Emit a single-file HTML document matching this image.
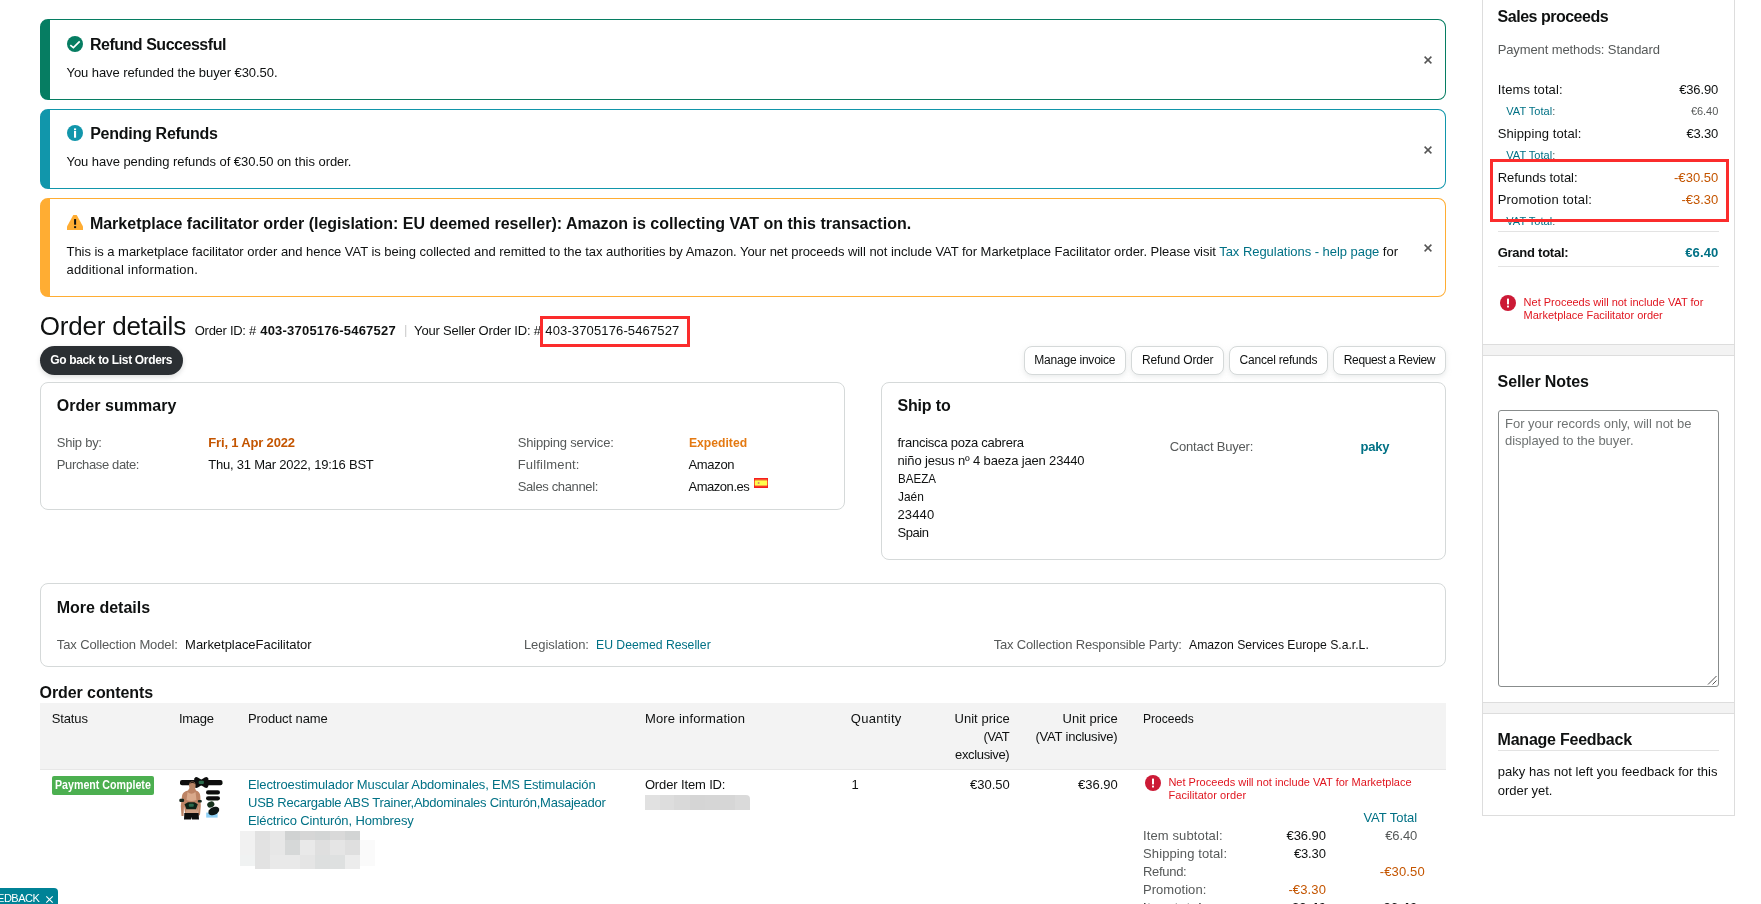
<!DOCTYPE html>
<html lang="en"><head><meta charset="utf-8"><title>Order details</title>
<style>
html,body{margin:0;padding:0;background:#fff;}
body{font-family:"Liberation Sans",sans-serif;color:#0F1111;}
#page{position:relative;width:1761px;height:904px;overflow:hidden;background:#fff;}
.t{position:absolute;white-space:nowrap;line-height:1;}
.b{position:absolute;box-sizing:border-box;}
.alert{border:1px solid;border-left-width:10px;border-radius:8px;background:#fff;}
.card{border:1px solid #D5D9D9;border-radius:8px;background:#fff;}
.btn{border:1px solid #D5D9D9;border-radius:8px;background:#fff;box-shadow:0 2px 5px rgba(213,217,217,.5);}
.hr{background:#E3E3E3;height:1px;}
svg{position:absolute;overflow:visible;}
#txt{position:absolute;left:0;top:0;width:1761px;height:904px;will-change:transform;z-index:6;}

</style></head>
<body>
<div id="page">
<!-- alerts -->
<div class="b alert" style="left:40px;top:19px;width:1406px;height:81px;border-color:#067D62;"></div>
<div class="b alert" style="left:40px;top:109px;width:1406px;height:80px;border-color:#1196AB;"></div>
<div class="b alert" style="left:40px;top:198px;width:1406px;height:99px;border-color:#FFAD33;"></div>
<svg style="left:67px;top:36px" width="16" height="16" viewBox="0 0 16 16"><circle cx="8" cy="8" r="8" fill="#067D62"/><path d="M3.3 9.1 L6.4 11.6 L12.7 5.3" fill="none" stroke="#fff" stroke-width="1.7"/></svg>
<svg style="left:67px;top:125px" width="16" height="16" viewBox="0 0 16 16"><circle cx="8" cy="8" r="8" fill="#1196AB"/><rect x="7" y="3.4" width="2.1" height="1.7" fill="#fff"/><rect x="7" y="5.9" width="2.1" height="6.8" fill="#fff"/></svg>
<svg style="left:67px;top:215px" width="16" height="15" viewBox="0 0 16 15"><path d="M6.3 0 H9.7 L16 11.5 V15 H0 V11.5 Z" fill="#FFAD33"/><rect x="7.1" y="4.1" width="2" height="5.6" fill="#0F1111"/><rect x="7.1" y="11.2" width="2" height="1.9" fill="#0F1111"/></svg>
<svg style="left:1424px;top:56px" width="8" height="8" viewBox="0 0 8 8"><path d="M0.6 0.6 L7.4 7.4 M7.4 0.6 L0.6 7.4" stroke="#555" stroke-width="1.5" fill="none"/></svg>
<svg style="left:1424px;top:145.5px" width="8" height="8" viewBox="0 0 8 8"><path d="M0.6 0.6 L7.4 7.4 M7.4 0.6 L0.6 7.4" stroke="#555" stroke-width="1.5" fill="none"/></svg>
<svg style="left:1424px;top:244px" width="8" height="8" viewBox="0 0 8 8"><path d="M0.6 0.6 L7.4 7.4 M7.4 0.6 L0.6 7.4" stroke="#555" stroke-width="1.5" fill="none"/></svg>
<!-- header -->
<div class="b" style="left:40px;top:346px;width:143px;height:29px;border-radius:14.5px;background:#2B2F33;box-shadow:0 2px 5px rgba(15,17,17,.15);"></div>
<div class="b btn" style="left:1024px;top:346px;width:102px;height:29px;"></div>
<div class="b btn" style="left:1131px;top:346px;width:93px;height:29px;"></div>
<div class="b btn" style="left:1229px;top:346px;width:99px;height:29px;"></div>
<div class="b btn" style="left:1333px;top:346px;width:113px;height:29px;"></div>
<div class="b" style="left:540px;top:316px;width:150px;height:31px;border:3px solid #FB2C2C;z-index:7;"></div>
<!-- cards -->
<div class="b card" style="left:40px;top:382px;width:805px;height:128px;"></div>
<div class="b card" style="left:881px;top:382px;width:565px;height:178px;"></div>
<div class="b card" style="left:40px;top:583px;width:1406px;height:84px;"></div>
<svg style="left:754px;top:478px" width="14" height="10" viewBox="0 0 14 10"><rect width="14" height="10" fill="#F71D1D"/><rect x="0.8" y="1.6" width="12.4" height="6.6" fill="#F6A53A"/><rect x="0.8" y="2.8" width="12.4" height="4.3" fill="#FFFF4D"/><circle cx="4.6" cy="5.1" r="1" fill="#D4826E"/></svg>
<!-- table -->
<div class="b" style="left:40px;top:703px;width:1406px;height:67px;background:#F3F3F3;border-bottom:1px solid #E7E7E7;"></div>
<div class="b" style="left:52px;top:776px;width:102px;height:19px;border-radius:2px;background:#4CAF50;"></div>
<!-- sidebar -->
<div class="b" style="left:1482px;top:-10px;width:253px;height:826px;border:1px solid #DDDDDD;background:#fff;"></div>
<div class="b" style="left:1483px;top:344px;width:251px;height:12px;background:#F3F3F3;border-top:1px solid #DDDDDD;border-bottom:1px solid #DDDDDD;"></div>
<div class="b" style="left:1483px;top:702px;width:251px;height:12px;background:#F3F3F3;border-top:1px solid #DDDDDD;border-bottom:1px solid #DDDDDD;"></div>
<div class="b hr" style="left:1498px;top:231px;width:221px;"></div>
<div class="b hr" style="left:1498px;top:266px;width:221px;"></div>
<div class="b hr" style="left:1498px;top:750px;width:221px;"></div>
<div class="b" style="left:1498px;top:410px;width:221px;height:277px;border:1px solid #888C8C;border-radius:3px;background:#fff;"></div>
<div class="b" style="left:1490px;top:159px;width:239px;height:63px;border:3px solid #FB2C2C;z-index:7;"></div>
<!-- feedback tab -->
<div class="b" style="left:0;top:887.5px;width:58px;height:20px;background:#008296;border-radius:0 4px 0 0;"></div>
<!-- error icons -->
<svg style="left:1145px;top:775px" width="16" height="16" viewBox="0 0 16 16"><circle cx="8" cy="8" r="8" fill="#CC1A36"/><rect x="7" y="3.4" width="2" height="6" rx="0.6" fill="#fff"/><rect x="7" y="10.6" width="2" height="2" rx="0.6" fill="#fff"/></svg>
<svg style="left:1500px;top:295px" width="16" height="16" viewBox="0 0 16 16"><circle cx="8" cy="8" r="8" fill="#CC1A36"/><rect x="7" y="3.4" width="2" height="6" rx="0.6" fill="#fff"/><rect x="7" y="10.6" width="2" height="2" rx="0.6" fill="#fff"/></svg>
<!-- product thumbnail -->
<svg style="left:179px;top:776px" width="44" height="44" viewBox="0 0 44 44">
<defs><filter id="sb" x="-10%" y="-10%" width="120%" height="120%"><feGaussianBlur stdDeviation="0.45"/></filter></defs>
<g filter="url(#sb)">
<rect x="1" y="4" width="42.5" height="5.2" rx="2" fill="#0b0f0d"/>
<g transform="translate(22.3 6.4)"><rect x="-8" y="-2.4" width="16" height="4.8" rx="2.4" fill="#0b0f0d" transform="rotate(32)"/><rect x="-8" y="-2.4" width="16" height="4.8" rx="2.4" fill="#0b0f0d" transform="rotate(-32)"/><rect x="-2.6" y="-1.6" width="5.2" height="3.2" rx="1" fill="#2a6b4c"/></g>
<path d="M3 20 Q3.5 15.5 9 14.5 L10.5 12 L16 12 L17 14.5 Q21 15.5 21.3 20 L21.8 30 L21 39 L19 40 L19.3 30 L18.6 37 L6 37 L5 30 L4.5 40 L2.5 40 L1.8 30 Z" fill="#bd8465"/>
<path d="M8.5 16 Q12.5 19.5 16.5 16 L17.5 24 Q12.5 26 7.5 24 Z" fill="#d9a98b"/>
<path d="M8 31.5 L17.5 31.5 L18.2 37 L6.5 37 Z" fill="#cf9f83"/>
<ellipse cx="13.3" cy="9.6" rx="3.3" ry="4" fill="#b98566"/>
<path d="M10 8 Q13.3 3.6 16.6 8 Q13.3 6.2 10 8Z" fill="#2a1d16"/>
<rect x="0.3" y="22.8" width="4.8" height="3.2" rx="1.2" fill="#17261d"/>
<rect x="18.8" y="24" width="4" height="2.6" rx="1" fill="#17261d"/>
<path d="M5.5 28.2 L9 26.3 L15.5 26.3 L18.8 28.2 L17 33.2 L7.5 33.2 Z" fill="#0e2218"/>
<rect x="9.8" y="27.8" width="5" height="3" rx="1" fill="#2a6b4c"/>
<path d="M5.3 37 L19.6 37 L20 43.6 L13 43.6 L12.5 41 L12 43.6 L5 43.6 Z" fill="#0e0e10"/>
<rect x="27" y="14.3" width="14" height="4.2" rx="2.1" fill="#0b0f0d"/>
<rect x="27" y="20.2" width="14" height="4.2" rx="2.1" fill="#0b0f0d"/>
<ellipse cx="31.8" cy="28.5" rx="3.7" ry="2.9" fill="#16301f" transform="rotate(-20 31.8 28.5)"/>
<rect x="27.2" y="36.6" width="11.4" height="5" fill="#8fd0f5"/>
<ellipse cx="34.8" cy="35" rx="5.7" ry="3.9" fill="#0d1512" transform="rotate(-25 34.8 35)"/>
</g>
</svg>
<!-- blurred / pixelated blocks -->
<div class="b" style="left:240px;top:831px;width:15px;height:9px;background:#F1F1F1;"></div>
<div class="b" style="left:255px;top:831px;width:15px;height:9px;background:#E1E1E1;"></div>
<div class="b" style="left:270px;top:831px;width:15px;height:9px;background:#E7E7E7;"></div>
<div class="b" style="left:285px;top:831px;width:15px;height:9px;background:#D0D2D2;"></div>
<div class="b" style="left:300px;top:831px;width:15px;height:9px;background:#D6D6D6;"></div>
<div class="b" style="left:315px;top:831px;width:15px;height:9px;background:#D3D5D5;"></div>
<div class="b" style="left:330px;top:831px;width:15px;height:9px;background:#D9D9D9;"></div>
<div class="b" style="left:345px;top:831px;width:15px;height:9px;background:#D2D4D4;"></div>
<div class="b" style="left:240px;top:840px;width:15px;height:15px;background:#F1F1F1;"></div>
<div class="b" style="left:255px;top:840px;width:15px;height:15px;background:#E2E2E2;"></div>
<div class="b" style="left:270px;top:840px;width:15px;height:15px;background:#E7E7E7;"></div>
<div class="b" style="left:285px;top:840px;width:15px;height:15px;background:#D6D8D8;"></div>
<div class="b" style="left:300px;top:840px;width:15px;height:15px;background:#E9E9E9;"></div>
<div class="b" style="left:315px;top:840px;width:15px;height:15px;background:#DFDFDF;"></div>
<div class="b" style="left:330px;top:840px;width:15px;height:15px;background:#E5E5E5;"></div>
<div class="b" style="left:345px;top:840px;width:15px;height:15px;background:#DFDFDF;"></div>
<div class="b" style="left:360px;top:840px;width:15px;height:15px;background:#FAFAFA;"></div>
<div class="b" style="left:240px;top:855px;width:15px;height:11px;background:#F0F2F2;"></div>
<div class="b" style="left:255px;top:855px;width:15px;height:14px;background:#E2E2E2;"></div>
<div class="b" style="left:270px;top:855px;width:15px;height:14px;background:#E9E9E9;"></div>
<div class="b" style="left:285px;top:855px;width:15px;height:14px;background:#E9E9E9;"></div>
<div class="b" style="left:300px;top:855px;width:15px;height:14px;background:#E5E5E5;"></div>
<div class="b" style="left:315px;top:855px;width:15px;height:14px;background:#DDDFDF;"></div>
<div class="b" style="left:330px;top:855px;width:15px;height:14px;background:#DEE0E0;"></div>
<div class="b" style="left:345px;top:855px;width:15px;height:14px;background:#ECECEC;"></div>
<div class="b" style="left:360px;top:855px;width:15px;height:11px;background:#FAFAFA;"></div>
<div class="b" style="left:645px;top:795px;width:105px;height:15px;border-radius:0 4px 0 0;background:linear-gradient(90deg,#E1E1E1 0,#E1E1E1 14%,#DDDDDD 14%,#DDDDDD 28%,#D9D9D9 28%,#D9D9D9 43%,#D5D5D5 43%,#D5D5D5 57%,#D6D6D6 57%,#D6D6D6 86%,#DADADA 86%);"></div>
<!-- textarea grip -->
<svg style="left:1707px;top:675px" width="10" height="10" viewBox="0 0 10 10"><path d="M1 9.5 L9.5 1 M5.5 9.5 L9.5 5.5" stroke="#555" stroke-width="1" fill="none"/></svg>
<!-- feedback close -->
<svg style="left:45.5px;top:895.5px" width="7" height="7" viewBox="0 0 7 7"><path d="M0.3 0.3 L6.7 6.7 M6.7 0.3 L0.3 6.7" stroke="#fff" stroke-width="1.1" fill="none"/></svg>

<div id="txt">
<span class="t" style="left:89.9px;top:37px;font-size:16px;font-weight:700;letter-spacing:-0.471px;">Refund Successful</span>
<span class="t" style="left:66.5px;top:66px;font-size:13px;letter-spacing:-0.073px;">You have refunded the buyer €30.50.</span>
<span class="t" style="left:90.2px;top:126px;font-size:16px;font-weight:700;letter-spacing:-0.269px;">Pending Refunds</span>
<span class="t" style="left:66.5px;top:155px;font-size:13px;letter-spacing:-0.046px;">You have pending refunds of €30.50 on this order.</span>
<span class="t" style="left:89.9px;top:216px;font-size:16px;font-weight:700;">Marketplace facilitator order (legislation: EU deemed reseller): Amazon is collecting VAT on this transaction.</span>
<span class="t" style="left:66.5px;top:245px;font-size:13px;letter-spacing:-0.04px;">This is a marketplace facilitator order and hence VAT is being collected and remitted to the tax authorities by Amazon. Your net proceeds will not include VAT for Marketplace Facilitator order. Please visit <span style="color:#007185">Tax Regulations - help page</span> for</span>
<span class="t" style="left:66.5px;top:263px;font-size:13px;letter-spacing:0.186px;">additional information.</span>
<span class="t" style="left:39.7px;top:313px;font-size:26px;letter-spacing:-0.195px;">Order details</span>
<span class="t" style="left:194.8px;top:324px;font-size:13px;letter-spacing:-0.29px;">Order ID: #</span>
<span class="t" style="left:260.2px;top:324px;font-size:13px;font-weight:700;letter-spacing:0.218px;">403-3705176-5467527</span>
<span class="t" style="left:404.0px;top:323px;font-size:13px;color:#CCCCCC;">|</span>
<span class="t" style="left:414.1px;top:324px;font-size:13px;letter-spacing:-0.188px;">Your Seller Order ID: #</span>
<span class="t" style="left:50.2px;top:354px;font-size:12px;font-weight:700;color:#FFFFFF;letter-spacing:-0.337px;">Go back to List Orders</span>
<span class="t" style="left:1034.3px;top:354px;font-size:12px;letter-spacing:-0.22px;">Manage invoice</span>
<span class="t" style="left:1141.9px;top:354px;font-size:12px;letter-spacing:-0.1px;">Refund Order</span>
<span class="t" style="left:1239.5px;top:354px;font-size:12px;letter-spacing:-0.209px;">Cancel refunds</span>
<span class="t" style="left:1343.8px;top:354px;font-size:12px;letter-spacing:-0.379px;">Request a Review</span>
<span class="t" style="left:56.7px;top:398px;font-size:16px;font-weight:700;letter-spacing:0.044px;">Order summary</span>
<span class="t" style="left:56.8px;top:436px;font-size:13px;color:#565959;letter-spacing:-0.255px;">Ship by:</span>
<span class="t" style="left:208.3px;top:436px;font-size:13px;font-weight:700;color:#C45500;letter-spacing:-0.173px;">Fri, 1 Apr 2022</span>
<span class="t" style="left:56.8px;top:458px;font-size:13px;color:#565959;letter-spacing:-0.366px;">Purchase date:</span>
<span class="t" style="left:208.3px;top:458px;font-size:13px;letter-spacing:-0.222px;">Thu, 31 Mar 2022, 19:16 BST</span>
<span class="t" style="left:517.7px;top:436px;font-size:13px;color:#565959;letter-spacing:-0.181px;">Shipping service:</span>
<span class="t" style="left:688.5px;top:436px;font-size:13px;font-weight:700;color:#E47911;transform:scaleX(0.9352);transform-origin:0 0;">Expedited</span>
<span class="t" style="left:517.7px;top:458px;font-size:13px;color:#565959;letter-spacing:0.183px;">Fulfilment:</span>
<span class="t" style="left:688.5px;top:458px;font-size:13px;letter-spacing:-0.321px;">Amazon</span>
<span class="t" style="left:517.7px;top:480px;font-size:13px;color:#565959;letter-spacing:-0.36px;">Sales channel:</span>
<span class="t" style="left:688.5px;top:480px;font-size:13px;letter-spacing:-0.468px;">Amazon.es</span>
<span class="t" style="left:897.4px;top:398px;font-size:16px;font-weight:700;letter-spacing:-0.153px;">Ship to</span>
<span class="t" style="left:897.5px;top:436px;font-size:13px;letter-spacing:-0.239px;">francisca poza cabrera</span>
<span class="t" style="left:897.5px;top:454px;font-size:13px;letter-spacing:-0.157px;">niño jesus nº 4 baeza jaen 23440</span>
<span class="t" style="left:897.5px;top:472px;font-size:13px;transform:scaleX(0.8891);transform-origin:0 0;">BAEZA</span>
<span class="t" style="left:897.5px;top:490px;font-size:13px;transform:scaleX(0.9148);transform-origin:0 0;">Jaén</span>
<span class="t" style="left:897.5px;top:508px;font-size:13px;letter-spacing:0.136px;">23440</span>
<span class="t" style="left:897.5px;top:526px;font-size:13px;letter-spacing:-0.438px;">Spain</span>
<span class="t" style="left:1169.8px;top:440px;font-size:13px;color:#565959;letter-spacing:-0.185px;">Contact Buyer:</span>
<span class="t" style="left:1360.5px;top:440px;font-size:13px;font-weight:700;color:#007185;letter-spacing:-0.214px;">paky</span>
<span class="t" style="left:56.7px;top:600px;font-size:16px;font-weight:700;letter-spacing:0.013px;">More details</span>
<span class="t" style="left:56.8px;top:638px;font-size:13px;color:#565959;letter-spacing:-0.128px;">Tax Collection Model:</span>
<span class="t" style="left:185.1px;top:638px;font-size:13px;letter-spacing:-0.031px;">MarketplaceFacilitator</span>
<span class="t" style="left:523.9px;top:638px;font-size:13px;color:#565959;letter-spacing:-0.062px;">Legislation:</span>
<span class="t" style="left:596.1px;top:638px;font-size:13px;color:#007185;transform:scaleX(0.9393);transform-origin:0 0;">EU Deemed Reseller</span>
<span class="t" style="left:993.7px;top:638px;font-size:13px;color:#565959;letter-spacing:-0.171px;">Tax Collection Responsible Party:</span>
<span class="t" style="left:1189.1px;top:638px;font-size:13px;transform:scaleX(0.939);transform-origin:0 0;">Amazon Services Europe S.a.r.L.</span>
<span class="t" style="left:39.6px;top:685px;font-size:16px;font-weight:700;letter-spacing:-0.084px;">Order contents</span>
<span class="t" style="left:51.8px;top:712px;font-size:13px;letter-spacing:-0.152px;">Status</span>
<span class="t" style="left:179.0px;top:712px;font-size:13px;letter-spacing:-0.31px;">Image</span>
<span class="t" style="left:248.0px;top:712px;font-size:13px;letter-spacing:-0.113px;">Product name</span>
<span class="t" style="left:644.9px;top:712px;font-size:13px;letter-spacing:0.17px;">More information</span>
<span class="t" style="left:850.8px;top:712px;font-size:13px;letter-spacing:0.297px;">Quantity</span>
<span class="t" style="left:954.5px;top:712px;font-size:13px;letter-spacing:0.031px;">Unit price</span>
<span class="t" style="left:983.5px;top:730px;font-size:13px;letter-spacing:-0.496px;">(VAT</span>
<span class="t" style="left:955.0px;top:748px;font-size:13px;letter-spacing:-0.344px;">exclusive)</span>
<span class="t" style="left:1062.5px;top:712px;font-size:13px;letter-spacing:0.031px;">Unit price</span>
<span class="t" style="left:1035.5px;top:730px;font-size:13px;letter-spacing:-0.218px;">(VAT inclusive)</span>
<span class="t" style="left:1142.9px;top:712px;font-size:13px;transform:scaleX(0.925);transform-origin:0 0;">Proceeds</span>
<span class="t" style="left:54.7px;top:779px;font-size:12px;font-weight:700;color:#FFFFFF;transform:scaleX(0.8868);transform-origin:0 0;">Payment Complete</span>
<span class="t" style="left:248.0px;top:778px;font-size:13px;color:#007185;letter-spacing:-0.126px;">Electroestimulador Muscular Abdominales, EMS Estimulación</span>
<span class="t" style="left:248.0px;top:796px;font-size:13px;color:#007185;letter-spacing:-0.252px;">USB Recargable ABS Trainer,Abdominales Cinturón,Masajeador</span>
<span class="t" style="left:248.0px;top:814px;font-size:13px;color:#007185;letter-spacing:-0.121px;">Eléctrico Cinturón, Hombresy</span>
<span class="t" style="left:644.9px;top:778px;font-size:13px;letter-spacing:-0.135px;">Order Item ID:</span>
<span class="t" style="left:851.5px;top:778px;font-size:13px;">1</span>
<span class="t" style="left:970.0px;top:778px;font-size:13px;letter-spacing:-0.013px;">€30.50</span>
<span class="t" style="left:1078.0px;top:778px;font-size:13px;letter-spacing:-0.013px;">€36.90</span>
<span class="t" style="left:1168.4px;top:777px;font-size:11px;color:#E0151F;letter-spacing:0.01px;">Net Proceeds will not include VAT for Marketplace</span>
<span class="t" style="left:1168.4px;top:790px;font-size:11px;color:#E0151F;letter-spacing:0.08px;">Facilitator order</span>
<span class="t" style="left:1363.4px;top:811px;font-size:13px;color:#007185;letter-spacing:-0.021px;">VAT Total</span>
<span class="t" style="left:1143.0px;top:829px;font-size:13px;color:#565959;letter-spacing:0.119px;">Item subtotal:</span>
<span class="t" style="left:1286.5px;top:829px;font-size:13px;letter-spacing:-0.073px;">€36.90</span>
<span class="t" style="left:1385.3px;top:829px;font-size:13px;color:#565959;letter-spacing:-0.162px;">€6.40</span>
<span class="t" style="left:1143.0px;top:847px;font-size:13px;color:#565959;letter-spacing:0.114px;">Shipping total:</span>
<span class="t" style="left:1293.9px;top:847px;font-size:13px;letter-spacing:-0.137px;">€3.30</span>
<span class="t" style="left:1143.0px;top:865px;font-size:13px;color:#565959;letter-spacing:-0.308px;">Refund:</span>
<span class="t" style="left:1379.7px;top:865px;font-size:13px;color:#C45500;letter-spacing:0.151px;">-€30.50</span>
<span class="t" style="left:1143.0px;top:883px;font-size:13px;color:#565959;letter-spacing:0.047px;">Promotion:</span>
<span class="t" style="left:1288.4px;top:883px;font-size:13px;color:#C45500;letter-spacing:0.125px;">-€3.30</span>
<span class="t" style="left:1143.0px;top:901px;font-size:13px;letter-spacing:0.542px;">Item total:</span>
<span class="t" style="left:1291.5px;top:901px;font-size:13px;font-weight:700;letter-spacing:0.463px;">€3.40</span>
<span class="t" style="left:1383.0px;top:901px;font-size:13px;font-weight:700;letter-spacing:0.413px;">€6.40</span>
<span class="t" style="left:1497.6px;top:9px;font-size:16px;font-weight:700;letter-spacing:-0.493px;">Sales proceeds</span>
<span class="t" style="left:1497.7px;top:43px;font-size:13px;color:#565959;letter-spacing:-0.107px;">Payment methods: Standard</span>
<span class="t" style="left:1497.7px;top:83px;font-size:13px;letter-spacing:0.12px;">Items total:</span>
<span class="t" style="left:1679.2px;top:83px;font-size:13px;letter-spacing:-0.153px;">€36.90</span>
<span class="t" style="left:1506.3px;top:106px;font-size:11px;color:#007185;letter-spacing:0.02px;">VAT Total<span style="color:#565959">:</span></span>
<span class="t" style="left:1691.0px;top:106px;font-size:11px;color:#565959;letter-spacing:-0.058px;">€6.40</span>
<span class="t" style="left:1497.7px;top:127px;font-size:13px;letter-spacing:0.092px;">Shipping total:</span>
<span class="t" style="left:1686.4px;top:127px;font-size:13px;letter-spacing:-0.187px;">€3.30</span>
<span class="t" style="left:1506.3px;top:150px;font-size:11px;color:#007185;letter-spacing:0.02px;">VAT Total<span style="color:#565959">:</span></span>
<span class="t" style="left:1506.3px;top:216px;font-size:11px;color:#007185;letter-spacing:0.02px;">VAT Total<span style="color:#565959">:</span></span>
<span class="t" style="left:1497.7px;top:246px;font-size:13px;font-weight:700;letter-spacing:-0.252px;">Grand total:</span>
<span class="t" style="left:1685.2px;top:246px;font-size:13px;font-weight:700;color:#007185;letter-spacing:0.138px;">€6.40</span>
<span class="t" style="left:1523.6px;top:297px;font-size:11px;color:#E0151F;">Net Proceeds will not include VAT for</span>
<span class="t" style="left:1523.6px;top:310px;font-size:11px;color:#E0151F;letter-spacing:-0.007px;">Marketplace Facilitator order</span>
<span class="t" style="left:1497.6px;top:374px;font-size:16px;font-weight:700;letter-spacing:-0.108px;">Seller Notes</span>
<span class="t" style="left:1505.0px;top:417px;font-size:13px;color:#6F7373;letter-spacing:-0.012px;">For your records only, will not be</span>
<span class="t" style="left:1505.0px;top:434px;font-size:13px;color:#6F7373;letter-spacing:-0.072px;">displayed to the buyer.</span>
<span class="t" style="left:1497.6px;top:732px;font-size:16px;font-weight:700;letter-spacing:-0.238px;">Manage Feedback</span>
<span class="t" style="left:1497.7px;top:765px;font-size:13px;letter-spacing:0.041px;">paky has not left you feedback for this</span>
<span class="t" style="left:1497.7px;top:784px;font-size:13px;letter-spacing:-0.014px;">order yet.</span>
<span class="t" style="left:-2.9px;top:893px;font-size:11px;color:#FFFFFF;letter-spacing:-0.51px;">EDBACK</span>
<span class="t" style="left:545.3px;top:324px;font-size:13px;letter-spacing:0.135px;z-index:5;">403-3705176-5467527</span>
<span class="t" style="left:1497.7px;top:171px;font-size:13px;letter-spacing:-0.025px;z-index:5;">Refunds total:</span>
<span class="t" style="left:1674.0px;top:171px;font-size:13px;color:#C45500;letter-spacing:0.034px;z-index:5;">-€30.50</span>
<span class="t" style="left:1497.7px;top:193px;font-size:13px;letter-spacing:0.21px;z-index:5;">Promotion total:</span>
<span class="t" style="left:1681.5px;top:193px;font-size:13px;color:#C45500;letter-spacing:-0.015px;z-index:5;">-€3.30</span>
</div>
</div>
</body></html>
